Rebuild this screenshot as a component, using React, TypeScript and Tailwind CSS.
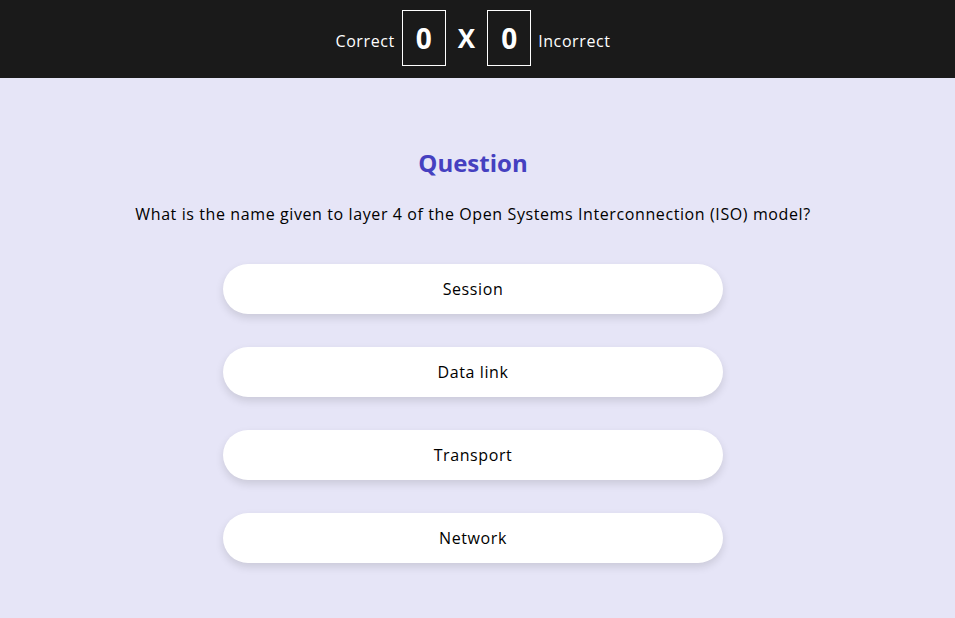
import React from "react";

const options = ["Session", "Data link", "Transport", "Network"];

export default function App() {
  return (
    <div
      className="min-h-[618px] bg-[#e6e5f7] flex flex-col"
      style={{ fontFamily: '"Open Sans", "Liberation Sans", sans-serif' }}
    >
      <header className="h-[78px] bg-[#1a1a1a] flex items-center justify-center gap-[7px] pr-[9px] pb-[2px] text-white">
        <span className="text-[16px] tracking-[0.6px] mt-[6px]">Correct</span>
        <div className="w-[44px] h-[56px] border border-white flex items-center justify-center text-[28px] font-bold">0</div>
        <span className="text-[26px] font-bold mx-[5px]">X</span>
        <div className="w-[44px] h-[56px] border border-white flex items-center justify-center text-[28px] font-bold">0</div>
        <span className="text-[16px] tracking-[0.6px] mt-[6px]">Incorrect</span>
      </header>
      <main className="flex flex-col items-center pt-[68px] pr-[9px]">
        <h1 className="text-[24px] font-bold text-[#4540c0] leading-[34px]">Question</h1>
        <p className="mt-[22px] text-[16px] text-black leading-[24px] tracking-[0.6px]">
          What is the name given to layer 4 of the Open Systems Interconnection (ISO) model?
        </p>
        <div className="mt-[38px] flex flex-col gap-[33px]">
          {options.map((o) => (
            <button
              key={o}
              className="w-[500px] h-[50px] rounded-full bg-white text-[16px] text-black tracking-[0.6px] shadow-[0_4px_8px_rgba(0,0,0,0.12)]"
            >
              {o}
            </button>
          ))}
        </div>
      </main>
    </div>
  );
}
